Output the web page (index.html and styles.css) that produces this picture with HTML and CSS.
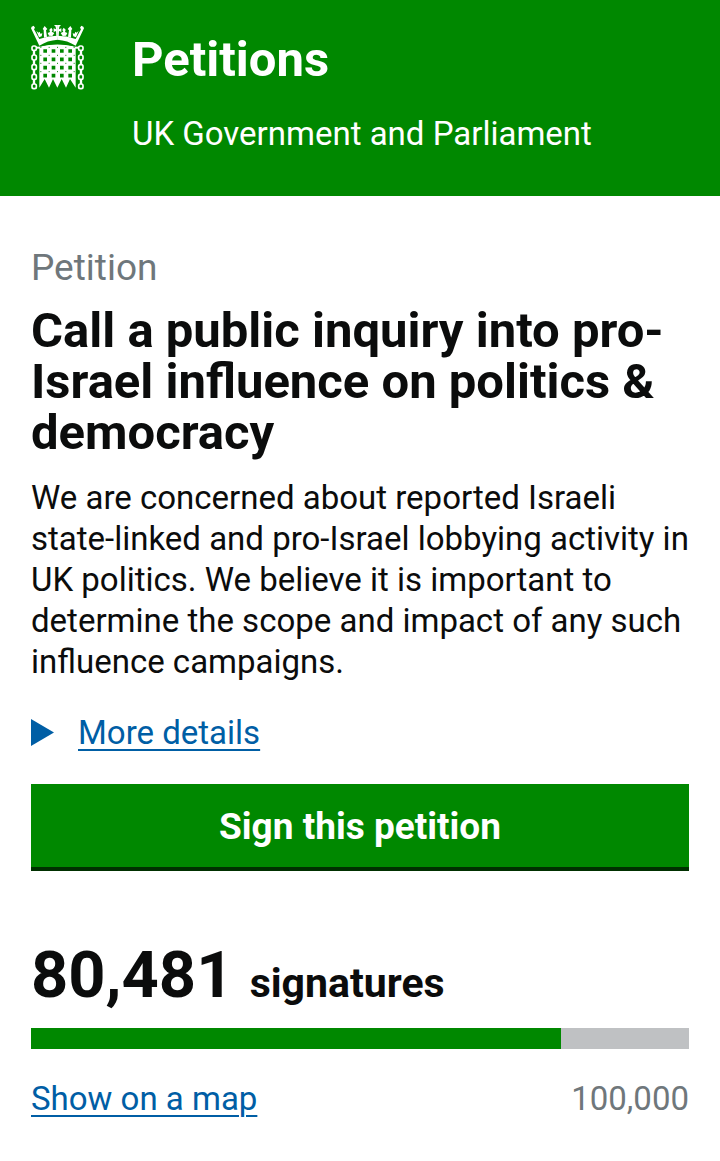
FILE: index.html
```html
<!DOCTYPE html>
<html lang="en">
<head>
<meta charset="utf-8">
<meta name="viewport" content="width=device-width, initial-scale=1">
<title>Petitions - UK Government and Parliament</title>
<link rel="stylesheet" href="styles.css">
</head>
<body>
<header class="masthead">
  <svg class="logo" viewBox="33 30 159 195" aria-hidden="true">
    <defs>
      <g id="chain" fill="none" stroke="#fff" stroke-width="5">
        <rect x="36" y="93" width="13" height="13" rx="5"/>
        <rect x="36" y="120" width="13" height="15" rx="5"/>
        <rect x="36" y="149" width="13" height="15" rx="5"/>
        <rect x="36" y="178" width="13" height="15" rx="5"/>
        <rect x="36" y="207" width="13" height="14" rx="5"/>
        <path d="M42 106v14M42 135v14M42 164v14M42 193v14" stroke-width="7"/>
        <path d="M49 98h11" stroke-width="6"/>
      </g>
      <g id="crown-side" fill="#fff">
        <path d="M58 92L33 40l2-5 6-3 4 6-3 5 16 29Q85 62 113 62V74Q82 76 58 92z"/>
        <path d="M74 33l8 9-4 4 3 19-9 3-1-23-3-3z"/>
        <path d="M49 47l6 6 4-3 2 6 6-1-2 9-8 3z"/>
        <path d="M102 30h11v35h-4l-1-17-7 3v-11l7 3-1-8z"/>
        <path d="M94 38l4 7-3 5 8 4-6 9-10-1-4-8 7-3-2-7z"/>
      </g>
    </defs>
    <use href="#crown-side"/>
    <use href="#crown-side" transform="matrix(-1 0 0 1 225 0)"/>
    <path d="M58 96Q112 76 167 96V218L150 192 138 218 125 192 112 218 99 192 87 218 74 192 58 218z" fill="#fff"/>
    <path d="M62 94Q112 68 163 94Q112 83 62 94z" fill="#080"/>
    <path d="M70 108h86M70 133h86M70 158h86M70 182h86" fill="none" stroke="#080" stroke-width="11" stroke-dasharray="11 14"/>
    <path d="M61 97h104M61 121h104M61 145h104M61 170h104" fill="none" stroke="#080" stroke-width="3" stroke-dasharray="3 22"/>
    <use href="#chain"/>
    <use href="#chain" transform="matrix(-1 0 0 1 225 0)"/>
  </svg>
  <div class="brand">
    <a class="brand-name" href="#">Petitions</a>
    <span class="brand-sub">UK Government and Parliament</span>
  </div>
</header>
<main class="petition">
  <h1 class="heading"><span class="kicker">Petition</span>Call a public inquiry into pro-Israel influence on politics &amp; democracy</h1>
  <p class="summary">We are concerned about reported Israeli state-linked and pro-Israel lobbying activity in UK politics. We believe it is important to determine the scope and impact of any such influence campaigns.</p>
  <button class="more" type="button" aria-expanded="false">
    <svg class="arrow" viewBox="0 0 23 27" aria-hidden="true"><path d="M0 0L23 13.500L0 27z"/></svg>
    <span class="more-label">More details</span>
  </button>
  <button class="sign" type="button">Sign this petition</button>
  <section class="count" aria-label="Signatures">
    <p class="total"><span class="number">80,481</span> signatures</p>
    <div class="bar"><div class="bar-fill" style="width: 80.481%"></div></div>
    <div class="foot">
      <a class="link" href="#">Show on a map</a>
      <span class="goal">100,000</span>
    </div>
  </section>
</main>
</body>
</html>
```
FILE: styles.css
```css
* {
  box-sizing: border-box;
}

body {
  margin: 0;
  background: #fff;
  color: #0b0c0c;
  font: 33px/41px Roboto, "Liberation Sans", sans-serif;
}

.masthead {
  display: flex;
  align-items: flex-start;
  gap: 48px;
  padding: 25px 31px 42px;
  background: #080;
  color: #fff;
}

.logo {
  flex: none;
  width: 53px;
  height: 65px;
}

.brand {
  display: flex;
  flex-direction: column;
  gap: 26px;
  padding-top: 8px;
}

.brand-name {
  color: inherit;
  font-size: 49px;
  font-weight: 700;
  line-height: 54px;
  text-decoration: none;
}

.petition {
  display: flex;
  flex-direction: column;
  align-items: flex-start;
  padding: 51px 31px 41px;
}

.heading {
  margin: 0;
  font-size: 49px;
  line-height: 51px;
}

.kicker {
  display: block;
  margin-bottom: 17px;
  color: #6f777b;
  font-size: 37px;
  font-weight: 400;
  line-height: 41px;
}

.summary {
  margin: 19px 0 0;
}

button {
  border: 0;
  font: inherit;
  cursor: pointer;
}

.more {
  display: flex;
  align-items: center;
  gap: 24px;
  margin-top: 30px;
  padding: 0;
  background: none;
  color: #005ea5;
}

.arrow {
  width: 23px;
  height: 27px;
  fill: currentColor;
}

.more-label,
.link {
  color: #005ea5;
  text-decoration: underline;
  text-decoration-thickness: 2px;
  text-underline-offset: 5px;
}

.sign {
  width: 100%;
  margin-top: 31px;
  padding: 22px 20px 20px;
  border-bottom: 4px solid #003000;
  background: #080;
  color: #fff;
  font-size: 37px;
  font-weight: 700;
}

.count {
  width: 100%;
  margin-top: 68px;
}

.total {
  margin: 0;
  font-size: 41px;
  font-weight: 700;
  line-height: 72px;
}

.number {
  margin-right: 6px;
  font-size: 65px;
}

.bar {
  height: 21px;
  margin-top: 9px;
  background: #bfc1c3;
}

.bar-fill {
  height: 100%;
  background: #080;
}

.foot {
  display: flex;
  justify-content: space-between;
  margin-top: 29px;
}

.goal {
  color: #6f777b;
}
```
